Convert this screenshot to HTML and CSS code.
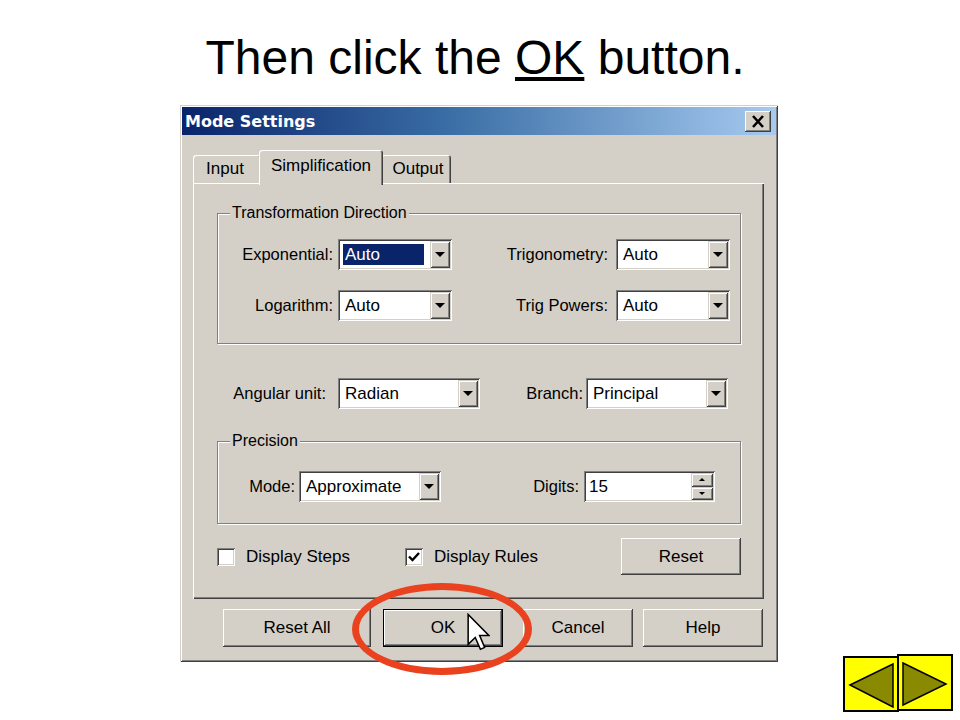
FILE: index.html
```html
<!DOCTYPE html>
<html lang="en">
<head>
  <meta charset="UTF-8">
  <title>Then click the OK button</title>
  <link rel="stylesheet" href="styles.css">
</head>
<body>
  <h1 class="slide-title">Then click the <u>OK</u> button.</h1>

  <div class="dialog">
    <div class="titlebar">
      <span class="titlebar-text">Mode Settings</span>
      <span class="close-btn">
        <svg width="26" height="21" viewBox="0 0 26 21"><path d="M8 5 L18 16 M18 5 L8 16" stroke="#000" stroke-width="2.6" fill="none"/></svg>
      </span>
    </div>

    <div class="dialog-body">
      <div class="tabs">
        <div class="tab tab-input">Input</div>
        <div class="tab tab-active">Simplification</div>
        <div class="tab tab-output">Output</div>
      </div>

      <div class="panel">
        <div class="group group-transform">
          <div class="group-title">Transformation Direction</div>
          <div class="row">
            <span class="lbl lbl-exp">Exponential:</span>
            <div class="combo combo-sm">
              <span class="combo-value is-selected">Auto</span>
              <span class="combo-arrow"></span>
            </div>
            <span class="lbl lbl-trig">Trigonometry:</span>
            <div class="combo combo-sm">
              <span class="combo-value">Auto</span>
              <span class="combo-arrow"></span>
            </div>
          </div>
          <div class="row">
            <span class="lbl lbl-exp">Logarithm:</span>
            <div class="combo combo-sm">
              <span class="combo-value">Auto</span>
              <span class="combo-arrow"></span>
            </div>
            <span class="lbl lbl-trig">Trig Powers:</span>
            <div class="combo combo-sm">
              <span class="combo-value">Auto</span>
              <span class="combo-arrow"></span>
            </div>
          </div>
        </div>

        <div class="row row-angular">
          <span class="lbl lbl-angular">Angular unit:</span>
          <div class="combo combo-md">
            <span class="combo-value">Radian</span>
            <span class="combo-arrow"></span>
          </div>
          <span class="lbl lbl-branch">Branch:</span>
          <div class="combo combo-md">
            <span class="combo-value">Principal</span>
            <span class="combo-arrow"></span>
          </div>
        </div>

        <div class="group group-precision">
          <div class="group-title">Precision</div>
          <div class="row row-precision">
            <span class="lbl lbl-mode">Mode:</span>
            <div class="combo combo-md">
              <span class="combo-value">Approximate</span>
              <span class="combo-arrow"></span>
            </div>
            <span class="lbl lbl-digits">Digits:</span>
            <div class="spin">
              <span class="spin-value">15</span>
              <span class="spin-btns">
                <span class="spin-btn spin-up"></span>
                <span class="spin-btn spin-down"></span>
              </span>
            </div>
          </div>
        </div>

        <div class="check-row">
          <label class="check check-steps"><span class="check-box"></span>Display Steps</label>
          <label class="check"><span class="check-box is-checked">
            <svg width="14" height="14" viewBox="0 0 14 14"><path d="M2 6.5 L5.5 10 L12 3" stroke="#000" stroke-width="2.4" fill="none"/></svg>
          </span>Display Rules</label>
          <span class="btn btn-reset">Reset</span>
        </div>
      </div>

      <div class="button-row">
        <span class="btn btn-reset-all">Reset All</span>
        <span class="btn btn-ok">OK</span>
        <span class="btn btn-cancel">Cancel</span>
        <span class="btn btn-help">Help</span>
      </div>
    </div>
  </div>

  <div class="highlight-ring"></div>
  <svg class="pointer" width="23" height="38" viewBox="0 0 12 19.5">
    <path d="M0.6 0.6 L0.6 16.2 L4.3 12.6 L7 18.8 L9.2 17.8 L6.6 11.6 L11.4 11.6 Z" fill="#fff" stroke="#000" stroke-width="0.8" stroke-linejoin="miter"/>
  </svg>

  <div class="slide-nav">
    <span class="nav-btn nav-prev">
      <svg width="52" height="52" viewBox="0 0 52 52"><polygon points="5,27 48,6 48,49" fill="#8a8a00" stroke="#000" stroke-width="1.5"/></svg>
    </span>
    <span class="nav-btn nav-next">
      <svg width="52" height="53" viewBox="0 0 52 53"><polygon points="4,7 47,28 4,49" fill="#8a8a00" stroke="#000" stroke-width="1.5"/></svg>
    </span>
  </div>
</body>
</html>
```

FILE: styles.css
```css
body {
  margin: 0;
  width: 960px;
  height: 720px;
  position: relative;
  overflow: hidden;
  background: #fff;
  color: #000;
  font-family: "Liberation Sans", Arial, sans-serif;
}

.slide-title {
  margin: 0;
  padding: 30px 10px 0 0;
  height: 56px;
  line-height: 56px;
  font-size: 48px;
  font-weight: normal;
  text-align: center;
}

/* dialog window */
.dialog {
  margin: 19px 0 0 180px;
  width: 598px;
  box-sizing: border-box;
  padding: 2px;
  background: #d4d0c8;
  box-shadow: inset 1px 1px #d4d0c8, inset -1px -1px #404040, inset 2px 2px #fff, inset -2px -2px #808080;
}

.titlebar {
  height: 28px;
  display: flex;
  align-items: center;
  justify-content: space-between;
  padding: 0 5px 0 3px;
  background: linear-gradient(to right, #0a246a 0%, #3a6ea5 45%, #a6caf0 100%);
}

.titlebar-text {
  color: #fff;
  font-family: "DejaVu Sans", sans-serif;
  font-weight: bold;
  font-size: 16px;
}

.close-btn {
  width: 26px;
  height: 21px;
  display: block;
  background: #d4d0c8;
  box-shadow: inset -1px -1px #404040, inset 1px 1px #fff, inset -2px -2px #808080;
}

.close-btn svg { display: block; }

.dialog-body {
  padding: 15px 12px 13px 11px;
}

/* tabs */
.tabs {
  display: flex;
  align-items: flex-end;
  height: 33px;
  font-size: 17px;
}

.tab {
  height: 28px;
  box-sizing: border-box;
  line-height: 28px;
  text-align: center;
  background: #d4d0c8;
  border-radius: 3px 3px 0 0;
  box-shadow: inset 1px 1px #fff, inset -1px 0 #404040, inset -2px 0 #808080;
}

.tab-input { width: 68px; padding-right: 4px; }
.tab-output { width: 70px; padding-left: 4px; }

.tab-active {
  position: relative;
  z-index: 1;
  width: 124px;
  height: 35px;
  margin: 0 -2px -2px -2px;
  line-height: 31px;
  box-shadow: inset 1px 1px #fff, inset -1px 0 #404040, inset -2px 0 #808080;
}

.panel {
  padding: 2px 2px 24px 2px;
  background: #d4d0c8;
  box-shadow: inset 1px 1px #fff, inset -1px -1px #404040, inset -2px -2px #808080;
}

/* etched group boxes */
.group {
  border: 1px solid #808080;
  box-shadow: inset 1px 1px #fff, 1px 1px #fff;
  margin: 0 21px 0 22px;
}

.group-title {
  width: fit-content;
  margin: -11px 0 0 12px;
  padding: 0 2px;
  line-height: 20px;
  font-size: 16px;
  background: #d4d0c8;
}

.group-transform {
  margin-top: 28px;
  padding-bottom: 22px;
}

.group-transform .group-title + .row { margin-top: 16px; }

.group-precision {
  margin-top: 32px;
  padding-bottom: 20px;
}

.group-precision .group-title + .row { margin-top: 19px; }

.row {
  display: flex;
  align-items: center;
  height: 31px;
}

.row + .row { margin-top: 20px; }

.row-angular { margin-top: 34px; }
.row-precision { height: 33px; }

.lbl {
  box-sizing: border-box;
  text-align: right;
  font-size: 16.5px;
  white-space: nowrap;
}

.lbl-exp { width: 120px; padding-right: 5px; }
.lbl-trig { width: 164px; padding-right: 8px; }
.lbl-angular { width: 143px; padding-right: 12px; }
.lbl-branch { width: 106px; padding-right: 3px; }
.lbl-mode { width: 81px; padding-right: 4px; }
.lbl-digits { width: 143px; padding-right: 5px; }

/* combo boxes */
.combo {
  display: flex;
  height: 31px;
  box-sizing: border-box;
  padding: 2px;
  background: #fff;
  box-shadow: inset 1px 1px #808080, inset -1px -1px #fff, inset 2px 2px #404040, inset -2px -2px #d4d0c8;
}

.combo-sm { width: 114px; }
.combo-md { width: 142px; }

.combo-value {
  flex: 1;
  padding-left: 5px;
  line-height: 27px;
  font-size: 17px;
  white-space: nowrap;
}

.combo-value.is-selected {
  margin: 3px 6px 3px 3px;
  padding-left: 2px;
  line-height: 21px;
  background: #0a246a;
  color: #fff;
}

.combo-arrow,
.spin-btn {
  display: flex;
  align-items: center;
  justify-content: center;
  background: #d4d0c8;
  box-shadow: inset 1px 1px #d4d0c8, inset -1px -1px #404040, inset 2px 2px #fff, inset -2px -2px #808080;
}

.combo-arrow { width: 20px; }

.combo-arrow::after {
  content: "";
  border-left: 5px solid transparent;
  border-right: 5px solid transparent;
  border-top: 5px solid #000;
}

/* spin box */
.spin {
  display: flex;
  width: 131px;
  height: 31px;
  box-sizing: border-box;
  padding: 2px;
  background: #fff;
  box-shadow: inset 1px 1px #808080, inset -1px -1px #fff, inset 2px 2px #404040, inset -2px -2px #d4d0c8;
}

.spin-value {
  flex: 1;
  padding-left: 3px;
  line-height: 27px;
  font-size: 17px;
}

.spin-btns {
  display: flex;
  flex-direction: column;
  width: 22px;
}

.spin-btn { flex: 1; }

.spin-up::after {
  content: "";
  border-left: 3px solid transparent;
  border-right: 3px solid transparent;
  border-bottom: 3px solid #000;
}

.spin-down::after {
  content: "";
  border-left: 3px solid transparent;
  border-right: 3px solid transparent;
  border-top: 3px solid #000;
}

/* checkboxes and buttons */
.check-row {
  display: flex;
  align-items: center;
  height: 37px;
  margin-top: 14px;
  padding: 0 21px 0 22px;
}

.check {
  display: flex;
  align-items: center;
  gap: 11px;
  font-size: 17px;
}

.check-steps { width: 188px; }

.check-box {
  width: 18px;
  height: 18px;
  box-sizing: border-box;
  display: flex;
  align-items: center;
  justify-content: center;
  background: #fff;
  box-shadow: inset 1px 1px #808080, inset -1px -1px #fff, inset 2px 2px #404040, inset -2px -2px #d4d0c8;
}

.btn {
  display: block;
  height: 37px;
  box-sizing: border-box;
  line-height: 37px;
  text-align: center;
  font-size: 17px;
  background: #d4d0c8;
  box-shadow: inset -1px -1px #404040, inset 1px 1px #fff, inset -2px -2px #808080, inset 2px 2px #d4d0c8;
}

.btn-reset { width: 120px; margin-left: auto; }

.button-row {
  display: flex;
  margin-top: 10px;
  padding-left: 30px;
}

.button-row .btn { height: 38px; line-height: 38px; }

.btn-reset-all { width: 148px; }
.btn-ok {
  width: 120px;
  margin-left: 12px;
  border: 1px solid #000;
  line-height: 36px !important;
}
.btn-cancel { width: 110px; margin-left: 20px; }
.btn-help { width: 120px; margin-left: 10px; }

/* slide overlays */
.highlight-ring {
  position: absolute;
  left: 352px;
  top: 583px;
  width: 180px;
  height: 92px;
  box-sizing: border-box;
  border: 7px solid #ea421f;
  border-radius: 50%;
}

.pointer {
  position: absolute;
  left: 467px;
  top: 613px;
}

.slide-nav {
  position: absolute;
  left: 843px;
  top: 654px;
  display: flex;
  align-items: flex-start;
}

.nav-btn {
  display: block;
  box-sizing: border-box;
  width: 56px;
  background: #ffff00;
  border: 2px solid #000;
}

.nav-btn svg { display: block; }

.nav-prev { height: 56px; margin-top: 2px; }
.nav-next { height: 57px; margin-left: -2px; }
```
